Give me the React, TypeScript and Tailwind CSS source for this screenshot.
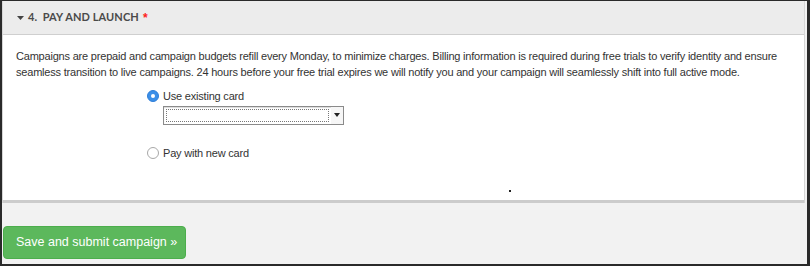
// Pay and launch step of the campaign form
import React from 'react'

const App: React.FC = () => {
  return (
    <div className="w-[810px] h-[266px] bg-[#f2f2f2] border-t border-l-2 border-r-[3px] border-b-2 border-[#2a2a2a] flex flex-col font-['Liberation_Sans',Arial,sans-serif] overflow-hidden">
      {/* Panel */}
      <div className="mr-[2px] border-x border-[#d6d6d6] bg-white flex flex-col">
        {/* Header */}
        <div className="h-[34px] bg-[#ececec] border-b border-[#cfcfcf] flex items-center pl-[14px]">
          <svg width="7" height="4" viewBox="0 0 7 4" className="mr-[4px] mt-[1px]">
            <path d="M0 0h7L3.5 4z" fill="#444" />
          </svg>
          <span className="font-['Lato',sans-serif] font-bold text-[11px] text-[#4a4a4a] tracking-[0.1px]">
            4.&nbsp; PAY AND LAUNCH
          </span>
          <span className="text-[#ff2020] text-[12px] ml-[4px] font-bold">*</span>
        </div>

        {/* Body */}
        <div className="relative h-[168px] px-[13px] pt-[13px] border-b-[3px] border-[#cccccc]">
          <p className="text-[11px] leading-[16px] tracking-[-0.2px] text-[#333]">
            Campaigns are prepaid and campaign budgets refill every Monday, to minimize charges. Billing information is required during free trials to verify identity and ensure seamless transition to live campaigns. 24 hours before your free trial expires we will notify you and your campaign will seamlessly shift into full active mode.
          </p>

          <div className="ml-[131px] mt-[8px] flex flex-col">
            <label className="flex items-center gap-[4px] text-[11px] tracking-[-0.2px] text-[#333]">
              <span className="w-[12px] h-[12px] rounded-full bg-[#3b8fe8] border border-[#2f7fd9] flex items-center justify-center">
                <span className="w-[4px] h-[4px] rounded-full bg-white" />
              </span>
              Use existing card
            </label>
            <div className="ml-[16px] mt-[1px] w-[181px] h-[19px] border border-[#8a8a8a] bg-white flex items-stretch shadow-[inset_0_1px_1px_rgba(0,0,0,0.15)]">
              <div className="flex-1 m-[2px] border border-dotted border-[#777]" />
              <div className="w-[12px] flex items-center justify-center bg-[#f6f6f6]">
                <svg width="6" height="4" viewBox="0 0 6 4">
                  <path d="M0 0h6L3 4z" fill="#222" />
                </svg>
              </div>
            </div>
            <label className="flex items-center gap-[4px] text-[11px] tracking-[-0.2px] text-[#333] mt-[20px]">
              <span className="w-[12px] h-[12px] rounded-full bg-white border border-[#a8a8a8]" />
              Pay with new card
            </label>
          </div>

          <span className="absolute left-[506px] top-[155px] w-[2px] h-[2px] bg-[#222]" />
        </div>
      </div>

      {/* Footer */}
      <div className="pt-[23px] pl-[1px]">
        <button className="w-[183px] h-[33px] rounded-[4px] bg-[#5cb85c] border border-[#4cae4c] text-white text-[12.5px] text-left pl-[12px] whitespace-nowrap">
          Save and submit campaign »
        </button>
      </div>
    </div>
  )
}

export default App
